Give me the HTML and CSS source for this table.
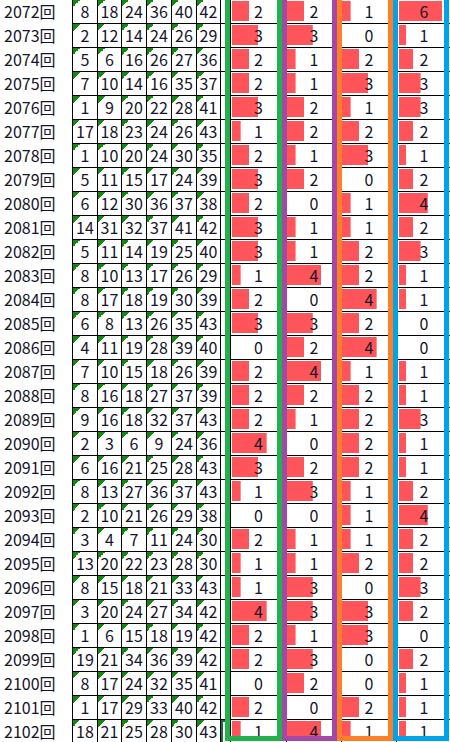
FILE: index.html
```html
<!DOCTYPE html>
<html lang="ja">
<head>
	<meta charset="UTF-8">
	<title>loto6</title>
	<link rel="stylesheet" href="styles.css">
</head>
<body>
	<div class="sheet">
		<div class="row"><div class="lbl">2072回</div><div class="n">8</div><div class="n">18</div><div class="n">24</div><div class="n">36</div><div class="n">40</div><div class="n">42</div><div class="sp"></div><div class="d c1 v2">2</div><div class="d c2 v2">2</div><div class="d c3 v1">1</div><div class="d c4 v6">6</div></div>
		<div class="row"><div class="lbl">2073回</div><div class="n">2</div><div class="n">12</div><div class="n">14</div><div class="n">24</div><div class="n">26</div><div class="n">29</div><div class="sp"></div><div class="d c1 v3">3</div><div class="d c2 v3">3</div><div class="d c3 v0">0</div><div class="d c4 v1">1</div></div>
		<div class="row"><div class="lbl">2074回</div><div class="n">5</div><div class="n">6</div><div class="n">16</div><div class="n">26</div><div class="n">27</div><div class="n">36</div><div class="sp"></div><div class="d c1 v2">2</div><div class="d c2 v1">1</div><div class="d c3 v2">2</div><div class="d c4 v2">2</div></div>
		<div class="row"><div class="lbl">2075回</div><div class="n">7</div><div class="n">10</div><div class="n">14</div><div class="n">16</div><div class="n">35</div><div class="n">37</div><div class="sp"></div><div class="d c1 v2">2</div><div class="d c2 v1">1</div><div class="d c3 v3">3</div><div class="d c4 v3">3</div></div>
		<div class="row"><div class="lbl">2076回</div><div class="n">1</div><div class="n">9</div><div class="n">20</div><div class="n">22</div><div class="n">28</div><div class="n">41</div><div class="sp"></div><div class="d c1 v3">3</div><div class="d c2 v2">2</div><div class="d c3 v1">1</div><div class="d c4 v3">3</div></div>
		<div class="row"><div class="lbl">2077回</div><div class="n">17</div><div class="n">18</div><div class="n">23</div><div class="n">24</div><div class="n">26</div><div class="n">43</div><div class="sp"></div><div class="d c1 v1">1</div><div class="d c2 v2">2</div><div class="d c3 v2">2</div><div class="d c4 v2">2</div></div>
		<div class="row"><div class="lbl">2078回</div><div class="n">1</div><div class="n">10</div><div class="n">20</div><div class="n">24</div><div class="n">30</div><div class="n">35</div><div class="sp"></div><div class="d c1 v2">2</div><div class="d c2 v1">1</div><div class="d c3 v3">3</div><div class="d c4 v1">1</div></div>
		<div class="row"><div class="lbl">2079回</div><div class="n">5</div><div class="n">11</div><div class="n">15</div><div class="n">17</div><div class="n">24</div><div class="n">39</div><div class="sp"></div><div class="d c1 v3">3</div><div class="d c2 v2">2</div><div class="d c3 v0">0</div><div class="d c4 v2">2</div></div>
		<div class="row"><div class="lbl">2080回</div><div class="n">6</div><div class="n">12</div><div class="n">30</div><div class="n">36</div><div class="n">37</div><div class="n">38</div><div class="sp"></div><div class="d c1 v2">2</div><div class="d c2 v0">0</div><div class="d c3 v1">1</div><div class="d c4 v4">4</div></div>
		<div class="row"><div class="lbl">2081回</div><div class="n">14</div><div class="n">31</div><div class="n">32</div><div class="n">37</div><div class="n">41</div><div class="n">42</div><div class="sp"></div><div class="d c1 v3">3</div><div class="d c2 v1">1</div><div class="d c3 v1">1</div><div class="d c4 v2">2</div></div>
		<div class="row"><div class="lbl">2082回</div><div class="n">5</div><div class="n">11</div><div class="n">14</div><div class="n">19</div><div class="n">25</div><div class="n">40</div><div class="sp"></div><div class="d c1 v3">3</div><div class="d c2 v1">1</div><div class="d c3 v2">2</div><div class="d c4 v3">3</div></div>
		<div class="row"><div class="lbl">2083回</div><div class="n">8</div><div class="n">10</div><div class="n">13</div><div class="n">17</div><div class="n">26</div><div class="n">29</div><div class="sp"></div><div class="d c1 v1">1</div><div class="d c2 v4">4</div><div class="d c3 v2">2</div><div class="d c4 v1">1</div></div>
		<div class="row"><div class="lbl">2084回</div><div class="n">8</div><div class="n">17</div><div class="n">18</div><div class="n">19</div><div class="n">30</div><div class="n">39</div><div class="sp"></div><div class="d c1 v2">2</div><div class="d c2 v0">0</div><div class="d c3 v4">4</div><div class="d c4 v1">1</div></div>
		<div class="row"><div class="lbl">2085回</div><div class="n">6</div><div class="n">8</div><div class="n">13</div><div class="n">26</div><div class="n">35</div><div class="n">43</div><div class="sp"></div><div class="d c1 v3">3</div><div class="d c2 v3">3</div><div class="d c3 v2">2</div><div class="d c4 v0">0</div></div>
		<div class="row"><div class="lbl">2086回</div><div class="n">4</div><div class="n">11</div><div class="n">19</div><div class="n">28</div><div class="n">39</div><div class="n">40</div><div class="sp"></div><div class="d c1 v0">0</div><div class="d c2 v2">2</div><div class="d c3 v4">4</div><div class="d c4 v0">0</div></div>
		<div class="row"><div class="lbl">2087回</div><div class="n">7</div><div class="n">10</div><div class="n">15</div><div class="n">18</div><div class="n">26</div><div class="n">39</div><div class="sp"></div><div class="d c1 v2">2</div><div class="d c2 v4">4</div><div class="d c3 v1">1</div><div class="d c4 v1">1</div></div>
		<div class="row"><div class="lbl">2088回</div><div class="n">8</div><div class="n">16</div><div class="n">18</div><div class="n">27</div><div class="n">37</div><div class="n">39</div><div class="sp"></div><div class="d c1 v2">2</div><div class="d c2 v2">2</div><div class="d c3 v2">2</div><div class="d c4 v1">1</div></div>
		<div class="row"><div class="lbl">2089回</div><div class="n">9</div><div class="n">16</div><div class="n">18</div><div class="n">32</div><div class="n">37</div><div class="n">43</div><div class="sp"></div><div class="d c1 v2">2</div><div class="d c2 v1">1</div><div class="d c3 v2">2</div><div class="d c4 v3">3</div></div>
		<div class="row"><div class="lbl">2090回</div><div class="n">2</div><div class="n">3</div><div class="n">6</div><div class="n">9</div><div class="n">24</div><div class="n">36</div><div class="sp"></div><div class="d c1 v4">4</div><div class="d c2 v0">0</div><div class="d c3 v2">2</div><div class="d c4 v1">1</div></div>
		<div class="row"><div class="lbl">2091回</div><div class="n">6</div><div class="n">16</div><div class="n">21</div><div class="n">25</div><div class="n">28</div><div class="n">43</div><div class="sp"></div><div class="d c1 v3">3</div><div class="d c2 v2">2</div><div class="d c3 v2">2</div><div class="d c4 v1">1</div></div>
		<div class="row"><div class="lbl">2092回</div><div class="n">8</div><div class="n">13</div><div class="n">27</div><div class="n">36</div><div class="n">37</div><div class="n">43</div><div class="sp"></div><div class="d c1 v1">1</div><div class="d c2 v3">3</div><div class="d c3 v1">1</div><div class="d c4 v2">2</div></div>
		<div class="row"><div class="lbl">2093回</div><div class="n">2</div><div class="n">10</div><div class="n">21</div><div class="n">26</div><div class="n">29</div><div class="n">38</div><div class="sp"></div><div class="d c1 v0">0</div><div class="d c2 v0">0</div><div class="d c3 v1">1</div><div class="d c4 v4">4</div></div>
		<div class="row"><div class="lbl">2094回</div><div class="n">3</div><div class="n">4</div><div class="n">7</div><div class="n">11</div><div class="n">24</div><div class="n">30</div><div class="sp"></div><div class="d c1 v2">2</div><div class="d c2 v1">1</div><div class="d c3 v1">1</div><div class="d c4 v2">2</div></div>
		<div class="row"><div class="lbl">2095回</div><div class="n">13</div><div class="n">20</div><div class="n">22</div><div class="n">23</div><div class="n">28</div><div class="n">30</div><div class="sp"></div><div class="d c1 v1">1</div><div class="d c2 v1">1</div><div class="d c3 v2">2</div><div class="d c4 v2">2</div></div>
		<div class="row"><div class="lbl">2096回</div><div class="n">8</div><div class="n">15</div><div class="n">18</div><div class="n">21</div><div class="n">33</div><div class="n">43</div><div class="sp"></div><div class="d c1 v1">1</div><div class="d c2 v3">3</div><div class="d c3 v0">0</div><div class="d c4 v3">3</div></div>
		<div class="row"><div class="lbl">2097回</div><div class="n">3</div><div class="n">20</div><div class="n">24</div><div class="n">27</div><div class="n">34</div><div class="n">42</div><div class="sp"></div><div class="d c1 v4">4</div><div class="d c2 v3">3</div><div class="d c3 v3">3</div><div class="d c4 v2">2</div></div>
		<div class="row"><div class="lbl">2098回</div><div class="n">1</div><div class="n">6</div><div class="n">15</div><div class="n">18</div><div class="n">19</div><div class="n">42</div><div class="sp"></div><div class="d c1 v2">2</div><div class="d c2 v1">1</div><div class="d c3 v3">3</div><div class="d c4 v0">0</div></div>
		<div class="row"><div class="lbl">2099回</div><div class="n">19</div><div class="n">21</div><div class="n">34</div><div class="n">36</div><div class="n">39</div><div class="n">42</div><div class="sp"></div><div class="d c1 v2">2</div><div class="d c2 v3">3</div><div class="d c3 v0">0</div><div class="d c4 v2">2</div></div>
		<div class="row"><div class="lbl">2100回</div><div class="n">8</div><div class="n">17</div><div class="n">24</div><div class="n">32</div><div class="n">35</div><div class="n">41</div><div class="sp"></div><div class="d c1 v0">0</div><div class="d c2 v2">2</div><div class="d c3 v0">0</div><div class="d c4 v1">1</div></div>
		<div class="row"><div class="lbl">2101回</div><div class="n">1</div><div class="n">17</div><div class="n">29</div><div class="n">33</div><div class="n">40</div><div class="n">42</div><div class="sp"></div><div class="d c1 v2">2</div><div class="d c2 v0">0</div><div class="d c3 v2">2</div><div class="d c4 v1">1</div></div>
		<div class="row"><div class="lbl">2102回</div><div class="n">18</div><div class="n">21</div><div class="n">25</div><div class="n">28</div><div class="n">30</div><div class="n">43</div><div class="sp sel"></div><div class="d c1 v1">1</div><div class="d c2 v4">4</div><div class="d c3 v1">1</div><div class="d c4 v1">1</div></div>

		<!-- 図形の枠 -->
		<div class="frame green"></div>
		<div class="frame purple"></div>
		<div class="frame orange"></div>
		<div class="frame blue"></div>
	</div>
</body>
</html>
```

FILE: styles.css
```css
html,body{
	margin: 0;
	padding: 0;
	background: #fff;
	overflow: hidden;
}
.sheet{
	position: relative;
	width: 451px;
	font-family: "Noto Sans CJK JP", sans-serif;
	font-size: 16px;
	color: #15152a;
}
.row{
	display: grid;
	grid-template-columns: 72px 25px 24px 25px 25px 25px 24px 10px 56px 55px 55px 55px;
	height: 24px;
	line-height: 23px;
}
.lbl{
	padding-left: 4px;
	white-space: nowrap;
}
.n,
.sp,
.d{
	border-left: 1px solid #000;
	border-bottom: 1px solid #000;
	text-align: center;
}
/* 緑の三角 */
.n{
	background: linear-gradient(135deg, #118a11 0 50%, transparent 50%) no-repeat 0 0 / 7px 7px;
}
.sel{
	box-shadow: inset 2px 2px 0 #1f6b45;
}
/* データバー */
.d{
	background-image: linear-gradient(#ff555a, #ff555a);
	background-repeat: no-repeat;
	background-position: var(--x) 1px;
	background-size: calc(var(--v) * var(--k)) 20px;
}
.c1{ --x: 1px; --k: 8.67px; }
.c2{ --x: 0px; --k: 8.6px; }
.c3{ --x: 0px; --k: 8.67px; }
.c4{ --x: 2px; --k: 7.2px; }
.v0{ --v: 0; }
.v1{ --v: 1; }
.v2{ --v: 2; }
.v3{ --v: 3; }
.v4{ --v: 4; }
.v6{ --v: 6; }

.frame{
	position: absolute;
	top: -10px;
	height: 751px;
	box-sizing: border-box;
	border: 5px solid;
}
.green{
	left: 225px;
	width: 57px;
	border-color: #22b14c;
}
.purple{
	left: 282px;
	width: 55px;
	border-color: #a349a4;
}
.orange{
	left: 337px;
	width: 56px;
	border-color: #ff7f27;
}
.blue{
	left: 393px;
	width: 56px;
	border-color: #00a2e8;
}
```
